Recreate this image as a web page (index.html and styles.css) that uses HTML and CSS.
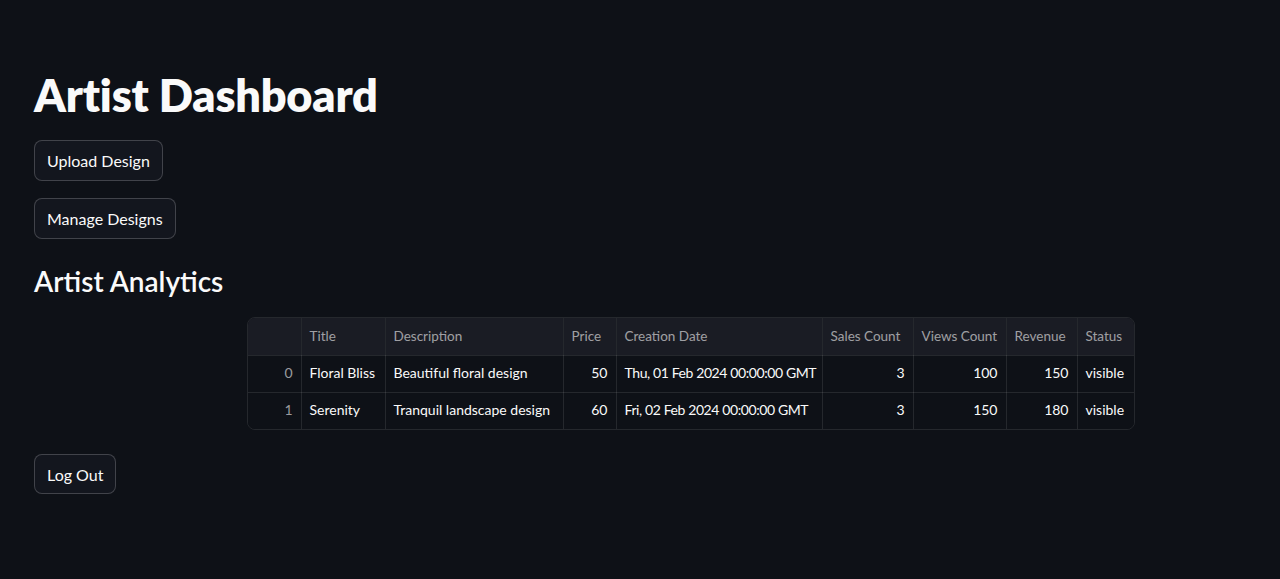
FILE: index.html
```html
<!DOCTYPE html>
<html lang="en">
<head>
<meta charset="utf-8">
<title>Artist Dashboard</title>
<link rel="stylesheet" href="styles.css">
</head>
<body>
<main class="main">
  <h1 class="title">Artist Dashboard</h1>
  <button class="btn btn-upload">Upload Design</button>
  <button class="btn btn-manage">Manage Designs</button>
  <h3 class="subtitle">Artist Analytics</h3>
  <div class="table-row">
    <div class="grid-wrap">
      <table class="grid">
        <colgroup>
          <col class="c-idx"><col class="c-title"><col class="c-desc"><col class="c-price"><col class="c-date"><col class="c-sales"><col class="c-views"><col class="c-rev"><col class="c-status">
        </colgroup>
        <thead>
          <tr>
            <th></th><th>Title</th><th>Description</th><th>Price</th><th>Creation Date</th><th>Sales Count</th><th>Views Count</th><th>Revenue</th><th>Status</th>
          </tr>
        </thead>
        <tbody>
          <tr>
            <td class="idx">0</td><td>Floral Bliss</td><td>Beautiful floral design</td><td class="num">50</td><td class="date">Thu, 01 Feb 2024 00:00:00 GMT</td><td class="num">3</td><td class="num">100</td><td class="num">150</td><td>visible</td>
          </tr>
          <tr>
            <td class="idx">1</td><td>Serenity</td><td>Tranquil landscape design</td><td class="num">60</td><td class="date">Fri, 02 Feb 2024 00:00:00 GMT</td><td class="num">3</td><td class="num">150</td><td class="num">180</td><td>visible</td>
          </tr>
        </tbody>
      </table>
    </div>
  </div>
  <button class="btn btn-logout">Log Out</button>
</main>
</body>
</html>
```

FILE: styles.css
```css
html, body {
  margin: 0;
  padding: 0;
  background: #0e1117;
  color: #fafafa;
  font-family: "Lato", "Noto Sans", sans-serif;
}

.main {
  display: flex;
  flex-direction: column;
  align-items: flex-start;
  padding: 69px 34px 0;
}

.title {
  margin: 0;
  font-size: 45px;
  line-height: 53px;
  font-weight: 800;
  letter-spacing: -0.2px;
}

.btn {
  font-family: inherit;
  font-size: 16px;
  color: #fafafa;
  background: #13161e;
  border: 1px solid rgba(250, 250, 250, 0.2);
  border-radius: 8px;
  height: 41px;
  padding: 0 12px;
  cursor: pointer;
}

.btn-upload { margin-top: 18px; }
.btn-manage { margin-top: 17px; }

.subtitle {
  margin: 24px 0 0;
  font-size: 28px;
  line-height: 36px;
  font-weight: 600;
}

.table-row {
  display: flex;
  padding-left: 213px;
  margin-top: 18px;
}

.grid-wrap {
  border: 1px solid rgba(250, 250, 250, 0.1);
  border-radius: 8px;
  overflow: hidden;
}

.grid {
  border-collapse: collapse;
  table-layout: fixed;
  width: 886px;
  font-size: 14px;
}

.c-idx { width: 53px; }
.c-title { width: 84px; }
.c-desc { width: 178px; }
.c-price { width: 53px; }
.c-date { width: 206px; }
.c-sales { width: 91px; }
.c-views { width: 93px; }
.c-rev { width: 71px; }
.c-status { width: 57px; }

.grid th,
.grid td {
  height: 37px;
  padding: 0 8px;
  border-right: 1px solid rgba(250, 250, 250, 0.1);
  border-bottom: 1px solid rgba(250, 250, 250, 0.1);
  white-space: nowrap;
  overflow: hidden;
  text-align: left;
  font-weight: 400;
  box-sizing: border-box;
}

.grid th { font-size: 13.5px; }
.grid td { padding-bottom: 2px; }

.grid th:last-child,
.grid td:last-child { border-right: none; }
.grid tbody tr:last-child td { border-bottom: none; }

.grid thead th {
  background: #1a1c24;
  color: rgba(250, 250, 250, 0.6);
}

.grid td { background: #0e1117; color: #fafafa; }
.grid td.num { text-align: right; }
.grid td.date { letter-spacing: -0.4px; }
.grid td.idx { text-align: right; color: rgba(250, 250, 250, 0.6); }

.btn-logout { margin-top: 24px; height: 40px; }
```
